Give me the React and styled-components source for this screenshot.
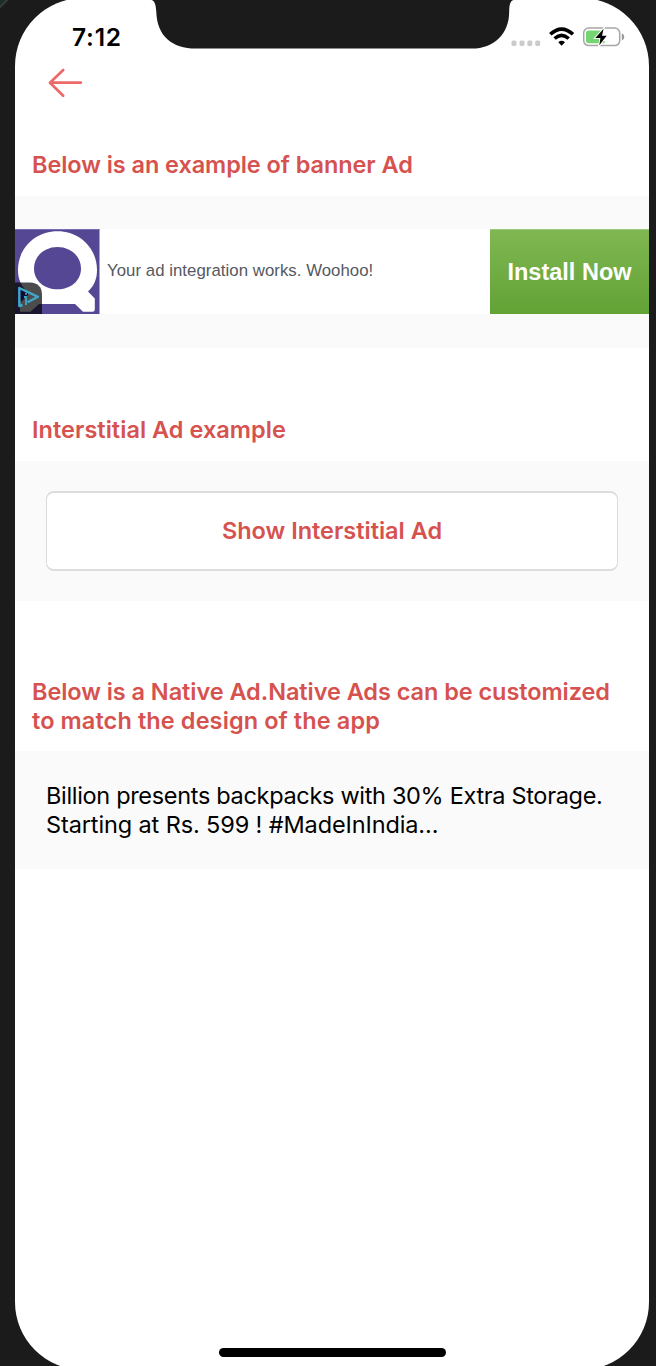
import React from "react";
import styled, { createGlobalStyle } from "styled-components";

const GlobalStyle = createGlobalStyle`
  * { box-sizing: border-box; }
  body { margin: 0; background: #1b1b1b; }
`;

const Device = styled.div`
  height: 1366px;
  width: 656px;
  padding: 0 7px 0 15px;
  overflow: hidden;
  background: linear-gradient(135deg, #1f2c2a 0 4px, #3a4745 5px, #1b1b1b 6.5px);
  font-family: Inter, "Liberation Sans", sans-serif;
`;

const Screen = styled.main`
  position: relative;
  display: flex;
  flex-direction: column;
  height: 1372px;
  margin-top: -2px;
  padding-top: 2px;
  border-radius: 68px;
  overflow: hidden;
  background: #fff;
`;

const Notch = styled.svg`
  position: absolute;
  top: 2px;
  left: 135px;
`;

const StatusBar = styled.header`
  display: flex;
  justify-content: space-between;
  height: 60px;
  padding: 22px 24px 0 57px;
`;

const Time = styled.time`
  font-size: 24.5px;
  line-height: 30px;
  font-weight: 600;
  letter-spacing: 0.8px;
  color: #000;
`;

const StatusIcons = styled.svg`
  display: block;
`;

const NavBar = styled.nav`
  height: 60px;
  padding: 7px 0 0 32px;
`;

const BackButton = styled.button`
  display: block;
  padding: 0;
  border: 0;
  background: none;
  line-height: 0;
`;

const Heading = styled.h2`
  margin: 0;
  height: ${(p) => p.$height}px;
  padding: ${(p) => p.$top}px 0 0 17px;
  font-size: 23.5px;
  line-height: 29px;
  font-weight: 600;
  color: #d6524f;
  white-space: nowrap;
`;

const Line = styled.span`
  display: block;
  letter-spacing: ${(p) => p.$tracking || 0}px;
`;

const Panel = styled.section`
  height: ${(p) => p.$height}px;
  padding: ${(p) => p.$padding};
  background: #fafafa;
`;

const Banner = styled.div`
  display: flex;
  align-items: center;
  height: 85px;
  background: #fff;
`;

const BannerText = styled.p`
  flex: 1;
  margin: 0;
  padding: 0 0 1px 7px;
  font: 16.8px/20px "Liberation Sans", sans-serif;
  letter-spacing: 0.04px;
  color: #555960;
  white-space: nowrap;
`;

const InstallButton = styled.button`
  width: 159px;
  height: 85px;
  padding: 0;
  border: 0;
  border-top: 1px solid #9cc77c;
  background: linear-gradient(#80b752, #62a235);
  color: #fff;
  font: bold 23.5px/28px "Liberation Sans", sans-serif;
  white-space: nowrap;
`;

const OutlineButton = styled.button`
  display: block;
  width: 572px;
  height: 80px;
  padding: 0 0 2px;
  border: solid #dcdcdc;
  border-width: 2px 1px;
  border-radius: 8px;
  background: #fff;
  color: #d6524f;
  font: 600 23.5px/29px Inter, sans-serif;
`;

const NativeText = styled.p`
  margin: 0;
  font-size: 23.5px;
  line-height: 29px;
  color: #000;
  white-space: nowrap;
`;

const HomeIndicator = styled.div`
  width: 227px;
  height: 9px;
  margin: auto 0 13px 204px;
  border-radius: 5px;
  background: #000;
`;

function AdLogo() {
  return (
    <svg width="85" height="85" viewBox="0 0 85 85">
      <rect width="84.5" height="85" fill="#564795" />
      <path d="M0 .5H84.5" stroke="#786db0" />
      <path
        fill="#fff"
        fillRule="evenodd"
        d="M42.5 2.3C64.5 2.3 82 19 82 41C82 50 79 57 73 62.5L79.8 69.5V80.5Q79.8 82.7 77.5 82.7H68L60 75H24L15.5 82.7H5V72L9 66L12 62.5C6 57 3 50 3 41C3 19 20.5 2.3 42.5 2.3ZM42.5 18C29.5 18 19 27 19 39.5C19 52 29.5 60.3 42.5 60.3C55.5 60.3 66 52 66 39.5C66 27 55.5 18 42.5 18Z"
      />
      <path d="M0 53.500H15Q27 54 27 66V85H0Z" fill="#000" opacity=".7" />
      <path d="M4.500 59L13 63V66L6 73Z" fill="#110b35" />
      <path d="M7.500 76L4.300 77V59L23 67.800L12.500 73.200" fill="none" stroke="#3fa8c8" strokeWidth="2.400" strokeLinejoin="round" />
      <path d="M9 68H11V76M11 63.700V65.700" fill="none" stroke="#3fa8c8" strokeWidth="1.800" />
    </svg>
  );
}

function StatusGlyphs() {
  return (
    <StatusIcons width="114" height="28" viewBox="511 22 114 28">
      <g fill="#cbcbcb">
        <rect x="511.500" y="40.500" width="5" height="5.500" rx="1.500" />
        <rect x="519.500" y="40.500" width="5" height="5.500" rx="1.500" />
        <rect x="527.300" y="40.500" width="5" height="5.500" rx="1.500" />
        <rect x="535.200" y="40.500" width="5" height="5.500" rx="1.500" />
      </g>
      <g fill="none" stroke="#000" strokeWidth="3.600">
        <path d="M550.300 34.300Q561.600 23.800 573 34.300" />
        <path d="M554.600 38.500Q561.600 32.300 568.700 38.500" />
      </g>
      <path d="M558.300 42.200Q561.600 39.300 565 42.200L561.600 45.800Z" fill="#000" />
      <rect x="583.700" y="28" width="36" height="17.600" rx="5" fill="#fff" stroke="#a6a6a6" strokeWidth="1.500" />
      <path d="M588.500 30.500H601L597 37L602 43.300H588.500Q586 43.300 586 40.800V33Q586 30.500 588.500 30.500Z" fill="#76d572" />
      <path d="M600 41.500L602.500 43.300H604.500L604.800 41Z" fill="#76d572" />
      <path d="M621.800 33.200Q624.300 34.300 624.300 36.900Q624.300 39.500 621.800 40.600Z" fill="#999" />
      <path d="M603.600 28.800L595.300 38H600.400L599.300 45.300L606.700 35.800H602Z" fill="#000" stroke="#fff" strokeWidth="2" paintOrder="stroke" />
    </StatusIcons>
  );
}

export default function App() {
  return (
    <>
      <GlobalStyle />
      <Device>
        <Screen>
          <Notch width="370" height="49" viewBox="150 0 370 49">
            <path
              fill="#1b1b1b"
              d="M151.500 0C155 1 155.800 5 156.300 12C157 36 172 48.600 196 48.600H472C494 48.600 509 34 509.200 12C509.300 5 510 1 513.500 0Z"
            />
          </Notch>
          <StatusBar>
            <Time>7:12</Time>
            <StatusGlyphs />
          </StatusBar>
          <NavBar>
            <BackButton aria-label="Back">
              <svg width="38" height="32" viewBox="0 0 38 32" fill="none" stroke="#ed6969" strokeWidth="2.700" strokeLinecap="round" strokeLinejoin="round">
                <path d="M16.200 3L3 15.700L16.200 28.700M3.500 15.700H33.800" />
              </svg>
            </BackButton>
          </NavBar>
          <Heading $height={76} $top={30}>
            <Line $tracking={-0.07}>Below is an example of banner Ad</Line>
          </Heading>
          <Panel $height={152} $padding="33px 0 0">
            <Banner>
              <AdLogo />
              <BannerText>Your ad integration works. Woohoo!</BannerText>
              <InstallButton>Install Now</InstallButton>
            </Banner>
          </Panel>
          <Heading $height={113} $top={67}>
            <Line $tracking={0.04}>Interstitial Ad example</Line>
          </Heading>
          <Panel $height={140} $padding="30px 0 0 31px">
            <OutlineButton>Show Interstitial Ad</OutlineButton>
          </Panel>
          <Heading $height={150} $top={76}>
            <Line $tracking={-0.06}>Below is a Native Ad.Native Ads can be customized</Line>
            <Line $tracking={0.1}>to match the design of the app</Line>
          </Heading>
          <Panel $height={118} $padding="30px 0 0 31px">
            <NativeText>
              <Line $tracking={-0.32}>Billion presents backpacks with 30% Extra Storage.</Line>
              <Line $tracking={-0.12}>Starting at Rs. 599 ! #MadeInIndia...</Line>
            </NativeText>
          </Panel>
          <HomeIndicator />
        </Screen>
      </Device>
    </>
  );
}
